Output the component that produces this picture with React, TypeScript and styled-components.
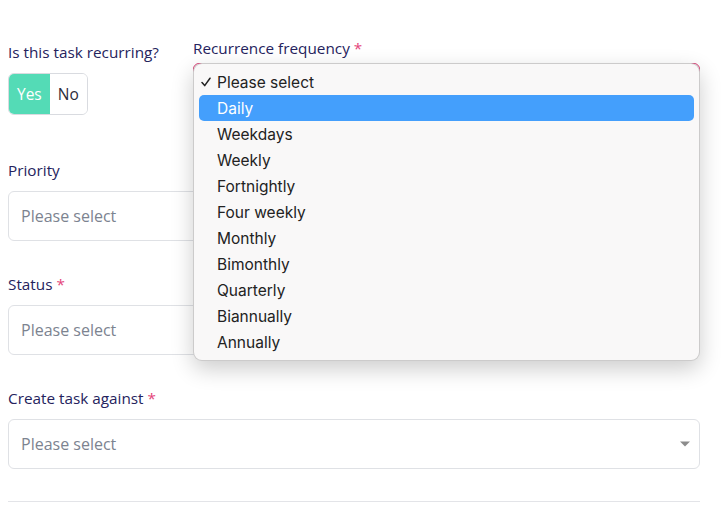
import React from 'react';
import styled, { createGlobalStyle } from 'styled-components';

const FREQUENCIES = [
	'Daily',
	'Weekdays',
	'Weekly',
	'Fortnightly',
	'Four weekly',
	'Monthly',
	'Bimonthly',
	'Quarterly',
	'Biannually',
	'Annually',
];

const GlobalStyle = createGlobalStyle`
	html, body {
		margin: 0;
		background: #ffffff;
	}
	body {
		font-family: 'Open Sans', Lato, sans-serif;
	}
`;

const Caret = () => (
	<CaretIcon width="10" height="6" viewBox="0 0 10 6">
		<path d="M0 0.5 H10 L5 5.5 Z" fill="#8c8c8c" />
	</CaretIcon>
);

const Check = () => (
	<CheckIcon width="10" height="10" viewBox="0 0 10 10">
		<path
			d="M1 5.6 L3.7 8.6 L9 1.2"
			fill="none"
			stroke="#222222"
			strokeWidth="1.5"
			strokeLinecap="round"
			strokeLinejoin="round"
		/>
	</CheckIcon>
);

const SelectField = ({ label, required }: { label: string; required?: boolean }) => (
	<Field>
		<Label>
			{label}
			{required && <Asterisk> *</Asterisk>}
		</Label>
		<Select>
			<Placeholder>Please select</Placeholder>
			<Caret />
		</Select>
	</Field>
);

const App = () => {
	return (
		<>
			<GlobalStyle />
			<Page>
				<TopRow>
					<RecurringColumn>
						<Label>Is this task recurring?</Label>
						<Toggle>
							<ToggleOption active>Yes</ToggleOption>
							<ToggleOption>No</ToggleOption>
						</Toggle>
					</RecurringColumn>
					<FrequencyColumn>
						<Label $tight>
							Recurrence frequency<Asterisk> *</Asterisk>
						</Label>
						{/* open native list sits over the select, so only its edges show */}
						<Select $invalid />
						<Menu>
							<MenuItem $selected>
								<Check />
								<span>Please select</span>
							</MenuItem>
							{FREQUENCIES.map((f, i) => (
								<MenuItem key={f} $highlighted={i === 0}>
									{f}
								</MenuItem>
							))}
						</Menu>
					</FrequencyColumn>
				</TopRow>
				<SelectField label="Priority" />
				<SelectField label="Status" required />
				<SelectField label="Create task against" required />
				<Divider />
			</Page>
		</>
	);
};

const Page = styled.div`
	padding: 37px 21px 0 8px;
	box-sizing: border-box;
	width: 721px;
`;

const TopRow = styled.div`
	display: flex;
	align-items: flex-start;
	margin-bottom: 45px;
`;

const RecurringColumn = styled.div`
	width: 185px;
	padding-top: 5px;
`;

const FrequencyColumn = styled.div`
	flex: 1;
	position: relative;
	padding-top: 1px;
`;

const Field = styled.div`
	margin-bottom: 33px;
`;

const Label = styled.div<{ $tight?: boolean }>`
	font-size: 15.3px;
	line-height: 20px;
	color: #25235d;
	margin-bottom: ${({ $tight }) => ($tight ? '5px' : '11px')};
`;

const Asterisk = styled.span`
	color: #e4457a;
`;

const Toggle = styled.div`
	display: inline-flex;
	height: 42px;
	border: 1px solid #d9dbe0;
	border-radius: 6px;
	overflow: hidden;
	box-sizing: border-box;
`;

const ToggleOption = styled.div<{ active?: boolean }>`
	display: flex;
	align-items: center;
	padding: 0 8px;
	font-size: 15.5px;
	background: ${({ active }) => (active ? '#54dbb6' : '#ffffff')};
	color: ${({ active }) => (active ? '#ffffff' : '#2c2c3a')};
`;

const Select = styled.div<{ $invalid?: boolean }>`
	display: flex;
	align-items: center;
	justify-content: space-between;
	height: 50px;
	box-sizing: border-box;
	padding: 0 9px 0 12px;
	border: 1px solid ${({ $invalid }) => ($invalid ? '#d6336c' : '#dfe1e5')};
	border-radius: 6px;
	background: #ffffff;
`;

const Placeholder = styled.span`
	font-size: 16px;
	color: #7c8390;
`;

const CaretIcon = styled.svg`
	flex-shrink: 0;
`;

const Menu = styled.div`
	position: absolute;
	top: 26px;
	left: 0;
	right: 0;
	padding: 5px;
	background: #f9f8f8;
	border: 1px solid rgba(0, 0, 0, 0.18);
	border-radius: 9px;
	box-shadow: 0 8px 22px rgba(0, 0, 0, 0.2);
	font-family: Inter, 'Liberation Sans', sans-serif;
	box-sizing: border-box;
`;

const MenuItem = styled.div<{ $highlighted?: boolean; $selected?: boolean }>`
	height: 26px;
	display: flex;
	align-items: center;
	padding-left: ${({ $selected }) => ($selected ? '2px' : '18px')};
	border-radius: 5px;
	font-size: 15.5px;
	color: ${({ $highlighted }) => ($highlighted ? '#ffffff' : '#222222')};
	background: ${({ $highlighted }) => ($highlighted ? '#449ffc' : 'transparent')};
`;

const CheckIcon = styled.svg`
	flex-shrink: 0;
	margin-right: 6px;
`;

const Divider = styled.div`
	height: 1px;
	background: #e3e4e8;
	margin-top: -1px;
`;

export default App;
